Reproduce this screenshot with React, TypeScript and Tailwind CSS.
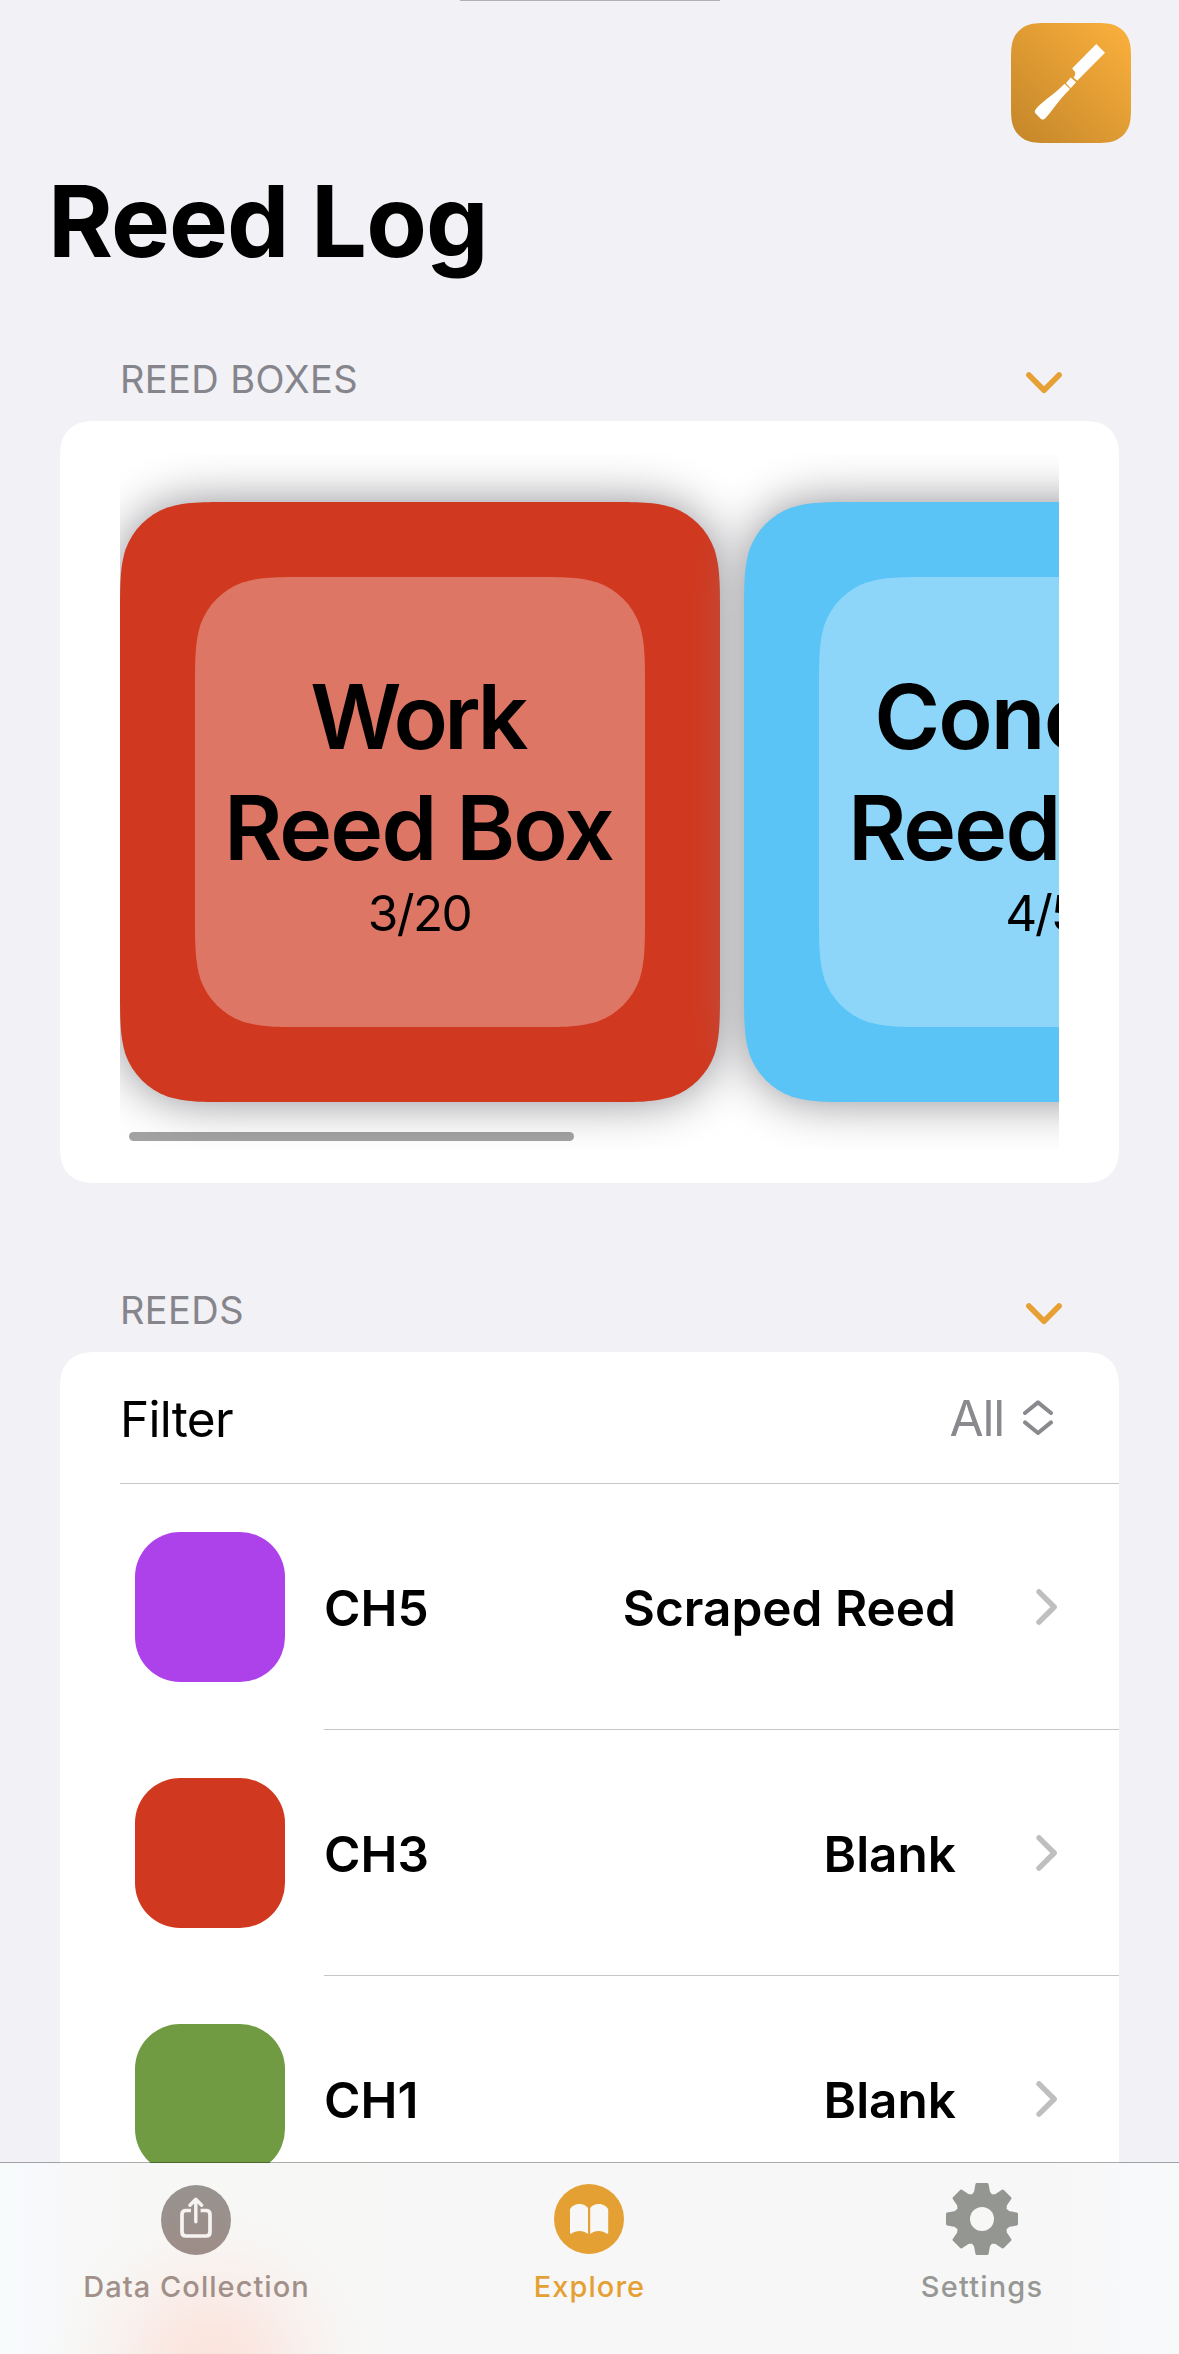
import React from 'react';

/** Rounded rectangle with iOS-style continuous corners, as a CSS path() value. */
function continuousRect(w: number, h: number, r: number): string {
  const a = 1.52866 * r;
  const b = 1.08849 * r;
  const c = 0.86841 * r;
  const d = 0.63149 * r;
  const e = 0.07491 * r;
  const f = 0.37282 * r;
  const g = 0.16906 * r;
  return (
    `path("M${a} 0 L${w - a} 0 C${w - b} 0 ${w - c} 0 ${w - d} ${e} C${w - f} ${g} ${w - g} ${f} ${w - e} ${d} C${w} ${c} ${w} ${b} ${w} ${a} ` +
    `L${w} ${h - a} C${w} ${h - b} ${w} ${h - c} ${w - e} ${h - d} C${w - g} ${h - f} ${w - f} ${h - g} ${w - d} ${h - e} C${w - c} ${h} ${w - b} ${h} ${w - a} ${h} ` +
    `L${a} ${h} C${b} ${h} ${c} ${h} ${d} ${h - e} C${f} ${h - g} ${g} ${h - f} ${e} ${h - d} C0 ${h - c} 0 ${h - b} 0 ${h - a} ` +
    `L0 ${a} C0 ${b} 0 ${c} ${e} ${d} C${g} ${f} ${f} ${g} ${d} ${e} C${c} 0 ${b} 0 ${a} 0 Z")`
  );
}

const CARD_SHAPE = continuousRect(600, 600, 75);
const CARD_INNER_SHAPE = continuousRect(450, 450, 75);
const APP_ICON_SHAPE = continuousRect(120, 120, 27);
const BOXES_SHAPE = continuousRect(1059, 762, 30);
const REEDS_SHAPE = continuousRect(1059, 1200, 30);

interface ReedBox {
  name: string;
  nameClass: string;
  kind: string;
  count: string;
  countClass: string;
  color: string;
}

const boxes: ReedBox[] = [
  { name: 'Work', nameClass: 'tracking-[-3.7px] mr-[5px]', kind: 'Reed Box', count: '3/20', countClass: 'mr-px tracking-[-1.6px]', color: 'bg-[#d03920]' },
  { name: 'Concert', nameClass: 'tracking-[-1.95px] mr-[4px]', kind: 'Reed Box', count: '4/5', countClass: 'mr-[4px] tracking-[-2.2px]', color: 'bg-[#5ac4f7]' },
];

interface Reed {
  id: string;
  stage: string;
  color: string;
}

const reeds: Reed[] = [
  { id: 'CH5', stage: 'Scraped Reed', color: 'bg-[#ad42eb]' },
  { id: 'CH3', stage: 'Blank', color: 'bg-[#d03920]' },
  { id: 'CH1', stage: 'Blank', color: 'bg-[#719b43]' },
];

function KnifeIcon() {
  return (
    <svg viewBox="0 0 120 120" className="size-[120px]" fill="#fff">
      <path d="M85.3 21 L94 29.7 L66.2 57.8 L62.6 54.6 C64 53 64.8 50.5 63.8 48.6 C63 47.3 61.6 47 61.3 45.3 Z" />
      <path d="M59.7 54.6 L65.1 59.3 L59.7 65.2 L55 60.2 Z" />
      <path d="M53.6 60.8 L59 66.1 C53 72 48 78 42.5 85.3 C39.5 89.3 37 92.5 34.4 95.2 C33 96.7 31.2 97 30 95.9 L24.6 90.6 C23.4 89.2 23.6 87.6 24.8 86.2 C28 82.3 32 79 36 75.8 C43 70.6 48.5 66 53.6 60.8 Z" />
    </svg>
  );
}

function ChevronDown() {
  return (
    <svg viewBox="0 0 36 22" className="mr-[-3px] mt-[7px] h-[22px] w-[36px]" fill="none" stroke="#e6a034" strokeWidth="5.6" strokeLinecap="round" strokeLinejoin="round">
      <path d="M2.9 3 L18 18.2 L33.1 3" />
    </svg>
  );
}

function ChevronRight() {
  return (
    <svg viewBox="0 0 22 36" className="h-[36px] w-[22px]" fill="none" stroke="#bfbfc1" strokeWidth="5.4" strokeLinecap="round" strokeLinejoin="round">
      <path d="M3 2.8 L18.2 18 L3 33.2" />
    </svg>
  );
}

function UpDown() {
  return (
    <svg viewBox="0 0 30 36" className="h-[36px] w-[30px]" fill="none" stroke="#8a8a8e" strokeWidth="4" strokeLinecap="round" strokeLinejoin="round">
      <path d="M2 13 L15 2.4 L28 13" />
      <path d="M2 22.4 L15 33 L28 22.4" />
    </svg>
  );
}

function ShareIcon() {
  return (
    <svg viewBox="0 0 70 70" className="mr-px size-[70px]" fill="none">
      <defs>
        <linearGradient id="shareTone" x1="0" y1="0" x2="0" y2="1">
          <stop offset="0" stopColor="#97938f" />
          <stop offset="1" stopColor="#9e8d88" />
        </linearGradient>
      </defs>
      <circle cx="35" cy="35" r="35" fill="url(#shareTone)" />
      <g stroke="#f7f3f2" strokeLinecap="round" strokeLinejoin="round">
        <path strokeWidth="3.7" strokeLinecap="butt" d="M30 25.5 H25 Q21 25.5 21 29.5 V47 Q21 51 25 51 H45 Q49 51 49 47 V29.5 Q49 25.5 45 25.5 H39.6" />
        <path strokeWidth="3.4" d="M34.8 14.4 V36.8 M28.9 20.2 L34.8 14.2 L40.7 20.2" />
      </g>
    </svg>
  );
}

function BookIcon() {
  return (
    <svg viewBox="0 0 70 70" className="mr-px size-[70px]">
      <circle cx="35" cy="35" r="35" fill="#e5a033" />
      <g fill="#f7f7f7">
        <path d="M16 25.2 C18 21.6 22 20 25.5 20 C29 20 32 21.5 34 24 V50 C31.5 48 28.8 47 25.7 47 C22.3 47 19.6 48 17.7 49.6 Q16 50.4 16 48.8 Z" />
        <path d="M54.2 25.2 C52.2 21.6 48.2 20 44.7 20 C41.2 20 38 21.5 36.2 24 V50 C38.7 48 41.4 47 44.5 47 C47.9 47 50.6 48 52.5 49.6 Q54.2 50.4 54.2 48.8 Z" />
      </g>
    </svg>
  );
}

const GEAR_POINTS = Array.from({ length: 8 }, (_, i) => {
  const t = (i * Math.PI) / 4;
  const tooth = [
    [-6.6, -26.5],
    [-5.1, -34.5],
    [5.1, -34.5],
    [6.6, -26.5],
    [9.5, -22.9],
  ];
  return tooth
    .map(([x, y]) => `${(36 + x * Math.cos(t) - y * Math.sin(t)).toFixed(2)},${(36 + x * Math.sin(t) + y * Math.cos(t)).toFixed(2)}`)
    .join(' ');
}).join(' ');

function GearIcon() {
  return (
    <svg viewBox="0 0 72 72" className="mr-px size-[72px]">
      <polygon points={GEAR_POINTS} fill="#949692" stroke="#949692" strokeWidth="3" strokeLinejoin="round" />
      <circle cx="36" cy="36" r="12" fill="#f7f7f6" />
    </svg>
  );
}

function SectionHeader({ title }: { title: string }) {
  return (
    <div className="mb-[12px] flex h-[60px] items-center justify-between px-[120px]">
      <h2 className="text-[38px] leading-[60px] tracking-[0.41px] text-[#85858b]">{title}</h2>
      <ChevronDown />
    </div>
  );
}

function BoxCard({ box }: { box: ReedBox }) {
  return (
    <div className="shrink-0 [filter:drop-shadow(0_0_24px_rgb(142_142_147))]">
      <div className={`flex size-[600px] items-center justify-center ${box.color}`} style={{ clipPath: CARD_SHAPE }}>
        <div className="flex size-[450px] flex-col items-center justify-center bg-white/31" style={{ clipPath: CARD_INNER_SHAPE }}>
          <p className={`text-[89.5px] font-semibold leading-[111px] ${box.nameClass}`}>{box.name}</p>
          <p className="mr-[3px] whitespace-nowrap text-[89.5px] font-semibold leading-[111px] tracking-[-1.85px]">{box.kind}</p>
          <p className={`text-[49.5px] leading-[60px] ${box.countClass}`}>{box.count}</p>
        </div>
      </div>
    </div>
  );
}

function ReedRow({ reed }: { reed: Reed }) {
  return (
    <div className="flex h-[246px] pl-[75px]">
      <div className="flex items-center pr-[39px]">
        <div className={`size-[150px] rounded-[45px] ${reed.color}`} />
      </div>
      <div className="flex flex-1 items-center border-b border-[#c6c6c8] pr-[61px] text-[49.5px] font-semibold leading-[60px]">
        <span className="mt-[2px]">{reed.id}</span>
        <span className="ml-auto mt-[2px]">{reed.stage}</span>
        <span className="ml-[80px]">
          <ChevronRight />
        </span>
      </div>
    </div>
  );
}

export default function App() {
  return (
    <div className="flex h-[2354px] w-[1179px] flex-col overflow-hidden bg-[#f2f1f6] font-['Inter',sans-serif] text-black">
      <main className="min-h-0 flex-1 overflow-hidden">
        <div className="mx-auto h-px w-[272px] bg-gradient-to-r from-transparent via-[#b2b0b7] to-transparent">
          <div className="mx-auto h-px w-[260px] bg-[#b2b0b7]" />
        </div>
        <header className="pt-[22px]">
          <div className="ml-auto mr-[48px] size-[120px] bg-gradient-to-tr from-[#c4862a] to-[#fcb13c]" style={{ clipPath: APP_ICON_SHAPE }}>
            <KnifeIcon />
          </div>
          <h1 className="ml-[48px] mt-[18px] text-[99px] font-bold leading-[120px] tracking-[-0.9px]">Reed Log</h1>
        </header>

        <section className="mt-[68px]">
          <SectionHeader title="REED BOXES" />
          <div className="mx-[60px] h-[762px] bg-white px-[60px] py-[33px]" style={{ clipPath: BOXES_SHAPE }}>
            <div className="relative flex h-[696px] gap-[24px] overflow-hidden py-[48px]">
              {boxes.map((box) => (
                <BoxCard key={box.name} box={box} />
              ))}
              <div className="absolute bottom-[9px] left-[9px] h-[9px] w-[445px] rounded-full bg-black/36" />
            </div>
          </div>
        </section>

        <section className="mt-[97px]">
          <SectionHeader title="REEDS" />
          <div className="mx-[60px] h-[1200px] bg-white" style={{ clipPath: REEDS_SHAPE }}>
            <div className="ml-[60px] flex h-[132px] items-center border-b border-[#c6c6c8] pr-[66px] text-[49.5px] leading-[60px]">
              <span className="mt-[3px] tracking-[-0.7px]">Filter</span>
              <span className="ml-auto mt-px tracking-[-1.2px] text-[#8a8a8e]">All</span>
              <span className="ml-[19px]">
                <UpDown />
              </span>
            </div>
            {reeds.map((reed) => (
              <ReedRow key={reed.id} reed={reed} />
            ))}
          </div>
        </section>
      </main>

      <nav className="relative grid h-[191px] shrink-0 grid-cols-3 bg-[#f7f7f6] bg-[radial-gradient(ellipse_165px_165px_at_212px_205px,#fbe2da_0%,rgb(251_229_222/0.85)_28%,rgb(250_236_232/0.55)_60%,rgb(248_243_241/0.25)_82%,rgb(247_247_246/0)_100%),linear-gradient(90deg,#f8fbfa_0px,#f7f9fc_30px,#f7f8f7_75px,#f7f7f5_250px,#f7f7f7_420px,#f7f7f7_1050px,#f8f9fb_1150px,#f7faf8_1179px)] text-[29px] font-medium leading-[36px]">
        <div className="absolute -top-px left-0 h-px w-full bg-black/33" />
        <div className="flex flex-col items-center pt-[22px] text-[#a09089]">
          <ShareIcon />
          <span className="mt-[14px] tracking-[1.04px]">Data Collection</span>
        </div>
        <div className="flex flex-col items-center pt-[21px] text-[#e5a033]">
          <BookIcon />
          <span className="mt-[15px] tracking-[1.04px]">Explore</span>
        </div>
        <div className="flex flex-col items-center pt-[20px] text-[#979895]">
          <GearIcon />
          <span className="mr-px mt-[14px] tracking-[1.17px]">Settings</span>
        </div>
      </nav>
    </div>
  );
}
